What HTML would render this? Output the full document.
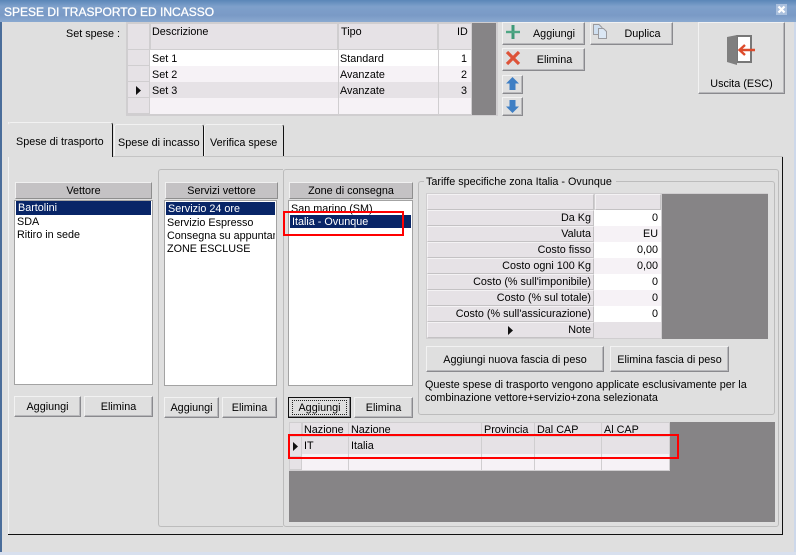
<!DOCTYPE html>
<html><head><meta charset="utf-8"><style>
html,body{margin:0;padding:0}
body{width:796px;height:555px;overflow:hidden;position:relative;background:#dfdfdf;font:10.8px/16px "Liberation Sans",sans-serif;color:#000}
div{position:absolute;box-sizing:border-box;white-space:nowrap}
svg{position:absolute}
.btn{background:#dfdfdf;border:1px solid;border-color:#f2f2f2 #8a8a8e #8a8a8e #f2f2f2;text-align:center;box-shadow:inset -1px -1px 0 #b8b8bb}
.hd{background:#c4c2c4;border:1px solid;border-color:#f0f0f0 #8e8e8e #8e8e8e #f0f0f0;text-align:center;line-height:16px}
.list{background:#fff;border:1px solid #a3a3a3}
.sel{background:#082567;color:#fff;height:14px;line-height:15px;padding-left:2px}
.it{height:13px;line-height:15px;padding-left:3px}
.c{background:#e6e2e6;border:1px solid;border-color:#f4f2f4 #c4c2c4 #c4c2c4 #f4f2f4;height:16px}
.t{line-height:16px}
.r{text-align:right}
.ln{background:#d0ced0}
.red{border:2px solid #f00}
.gray{background:#868486}
</style></head><body>
<!-- window frame -->
<div style="left:0;top:0;width:796px;height:22px;background:linear-gradient(#5a86b8,#7ea0cb 30%,#7a9ac6 70%,#8aa9d0)"></div>
<div style="left:0;top:22px;width:2px;height:533px;background:#4a6d9a"></div>
<div style="left:794px;top:22px;width:2px;height:533px;background:#cdd8ea"></div>
<div style="left:0;top:552px;width:796px;height:3px;background:#d8e0ee"></div>
<div style="left:4px;top:4px;color:#fff;font-size:12px;line-height:16px;-webkit-text-stroke:.3px #fff">SPESE DI TRASPORTO ED INCASSO</div>
<div style="left:776px;top:4px;width:11px;height:11px;background:#a9bfdd"></div>
<svg style="left:776px;top:4px" width="11" height="11"><path d="M2.5 2.5L8.5 8.5M8.5 2.5L2.5 8.5" stroke="#fff" stroke-width="2.2"/></svg>

<!-- Set spese grid -->
<div class="t" style="left:66px;top:26px">Set spese :</div>
<div style="left:126px;top:22px;width:372px;height:94px;background:#d0ced0"></div>
<div style="left:128px;top:24px;width:21px;height:25px;background:#e6e2e6"></div>
<div style="left:151px;top:24px;width:186px;height:25px;background:#e6e2e6"></div>
<div style="left:339px;top:24px;width:98px;height:25px;background:#e6e2e6"></div>
<div style="left:439px;top:24px;width:32px;height:25px;background:#e6e2e6"></div>
<div style="left:472px;top:23px;width:24px;height:92px;background:#868486"></div>
<div style="left:128px;top:50px;width:21px;height:15px;background:#e6e2e6"></div>
<div style="left:128px;top:66px;width:21px;height:15px;background:#e6e2e6"></div>
<div style="left:128px;top:82px;width:21px;height:15px;background:#e6e2e6"></div>
<div style="left:128px;top:98px;width:21px;height:15px;background:#e6e2e6"></div>
<div style="left:150px;top:50px;width:321px;height:16px;background:#fff"></div>
<div style="left:150px;top:66px;width:321px;height:16px;background:#f6f2f6"></div>
<div style="left:150px;top:82px;width:321px;height:16px;background:#e6e2e6"></div>
<div style="left:150px;top:98px;width:321px;height:16px;background:#f6f2f6"></div>
<div class="ln" style="left:338px;top:50px;width:1px;height:64px"></div>
<div class="ln" style="left:438px;top:50px;width:1px;height:64px"></div>
<div class="t" style="left:152px;top:24px">Descrizione</div>
<div class="t" style="left:341px;top:24px">Tipo</div>
<div class="t" style="left:457px;top:24px">ID</div>
<div class="t" style="left:152px;top:51px">Set 1</div>
<div class="t" style="left:340px;top:51px">Standard</div>
<div class="t r" style="left:447px;top:51px;width:20px">1</div>
<div class="t" style="left:152px;top:67px">Set 2</div>
<div class="t" style="left:340px;top:67px">Avanzate</div>
<div class="t r" style="left:447px;top:67px;width:20px">2</div>
<div class="t" style="left:152px;top:83px">Set 3</div>
<div class="t" style="left:340px;top:83px">Avanzate</div>
<div class="t r" style="left:447px;top:83px;width:20px">3</div>
<svg style="left:135px;top:85px" width="7" height="11"><path d="M1 1L6 5.5L1 10Z" fill="#111"/></svg>

<!-- top buttons -->
<div class="btn" style="left:502px;top:22px;width:83px;height:23px;padding:3px 0 0 21px">Aggiungi</div>
<svg style="left:505px;top:24px" width="16" height="16"><path d="M8 1V15" stroke="#3f9a78" stroke-width="3"/><path d="M1 8H15" stroke="#4fa684" stroke-width="2.4"/></svg>
<div class="btn" style="left:590px;top:22px;width:83px;height:23px;padding:3px 0 0 22px">Duplica</div>
<svg style="left:592px;top:23px" width="17" height="17"><path d="M1.500 1.500H7L10 4.500V11.500H1.500Z" fill="#cfdff0" stroke="#9a9a9e"/><path d="M6.500 5.500H11.500L14.500 8.500V15.500H6.500Z" fill="#dbe7f4" stroke="#9a9a9e"/></svg>
<div class="btn" style="left:502px;top:48px;width:83px;height:23px;padding:3px 0 0 22px">Elimina</div>
<svg style="left:505px;top:50px" width="16" height="16"><path d="M2 2L14 14M14 2L2 14" stroke="#dd5338" stroke-width="3.200"/></svg>
<div class="btn" style="left:502px;top:75px;width:21px;height:19px"></div>
<svg style="left:505px;top:76px" width="15" height="15"><path d="M7.500 1L14 7.500H10.500V14H4.500V7.500H1Z" fill="#3f7fc4"/></svg>
<div class="btn" style="left:502px;top:97px;width:21px;height:19px"></div>
<svg style="left:505px;top:99px" width="15" height="15"><path d="M7.500 14L14 7.500H10.500V1H4.500V7.500H1Z" fill="#3f7fc4"/></svg>
<div class="btn" style="left:698px;top:22px;width:87px;height:72px;padding:53px 0 0 0">Uscita (ESC)</div>
<svg style="left:725px;top:33px" width="32" height="34"><rect x="12" y="3" width="14" height="26" fill="#fff" stroke="#777" stroke-width="2"/><path d="M2 4L12 2V32L2 29Z" fill="#7f7f7f"/><path d="M30 17H15M20 12L14.500 17L20 22" fill="none" stroke="#dd4b2c" stroke-width="2.400"/></svg>

<!-- tabs -->
<div style="left:8px;top:156px;width:775px;height:1px;background:#c4c4c4"></div>
<div style="left:782px;top:157px;width:1px;height:378px;background:#111"></div>
<div style="left:8px;top:534px;width:775px;height:1px;background:#111"></div>
<div style="left:8px;top:122px;width:1px;height:412px;background:#f2f2f2"></div>
<div style="left:8px;top:122px;width:105px;height:35px;background:#dfdfdf;border-top:1px solid #f2f2f2;border-right:1px solid #111;border-radius:3px 3px 0 0"></div>
<div style="left:114px;top:124px;width:90px;height:32px;border-top:1px solid #f2f2f2;border-left:1px solid #f2f2f2;border-right:1px solid #111;border-radius:3px 3px 0 0"></div>
<div style="left:204px;top:124px;width:80px;height:32px;border-top:1px solid #f2f2f2;border-left:1px solid #f2f2f2;border-right:1px solid #111;border-radius:3px 3px 0 0"></div>
<div class="t" style="left:16px;top:134px">Spese di trasporto</div>
<div class="t" style="left:118px;top:135px">Spese di incasso</div>
<div class="t" style="left:210px;top:135px">Verifica spese</div>

<!-- inner panels -->
<div style="left:158px;top:169px;width:125px;height:358px;border:1px solid #bcbcbc;border-right:0;border-radius:3px 0 0 3px"></div>
<div style="left:283px;top:169px;width:496px;height:358px;border:1px solid #bcbcbc;border-radius:3px"></div>

<!-- Vettore -->
<div class="hd" style="left:15px;top:182px;width:137px;height:17px">Vettore</div>
<div class="list" style="left:14px;top:200px;width:139px;height:185px"></div>
<div class="sel" style="left:16px;top:201px;width:135px">Bartolini</div>
<div class="it" style="left:14px;top:215px">SDA</div>
<div class="it" style="left:14px;top:228px">Ritiro in sede</div>
<div class="btn" style="left:14px;top:396px;width:67px;height:21px;padding-top:2px">Aggiungi</div>
<div class="btn" style="left:84px;top:396px;width:69px;height:21px;padding-top:2px">Elimina</div>

<!-- Servizi -->
<div class="hd" style="left:165px;top:182px;width:113px;height:17px">Servizi vettore</div>
<div class="list" style="left:164px;top:200px;width:113px;height:186px"></div>
<div class="sel" style="left:166px;top:202px;width:109px;height:13px">Servizio 24 ore</div>
<div class="it" style="left:164px;top:216px">Servizio Espresso</div>
<div class="it" style="left:164px;top:229px;width:111px;overflow:hidden">Consegna su appuntamento</div>
<div class="it" style="left:164px;top:242px">ZONE ESCLUSE</div>
<div class="btn" style="left:164px;top:397px;width:55px;height:21px;padding-top:2px">Aggiungi</div>
<div class="btn" style="left:222px;top:397px;width:55px;height:21px;padding-top:2px">Elimina</div>

<!-- Zone -->
<div class="hd" style="left:289px;top:182px;width:124px;height:17px">Zone di consegna</div>
<div class="list" style="left:288px;top:200px;width:125px;height:186px"></div>
<div class="it" style="left:288px;top:202px">San marino (SM)</div>
<div class="sel" style="left:290px;top:215px;width:121px;height:13px">Italia - Ovunque</div>
<div style="left:288px;top:397px;width:63px;height:21px;border:1px solid #111;background:#dfdfdf;text-align:center;padding-top:2px;box-shadow:inset -1px -1px 0 #8a8a8e">Aggiungi</div>
<div style="left:292px;top:400px;width:55px;height:15px;border:1px dotted #222"></div>
<div class="btn" style="left:354px;top:397px;width:59px;height:21px;padding-top:2px">Elimina</div>

<!-- Group -->
<div style="left:418px;top:181px;width:357px;height:234px;border:1px solid #bcbcbc;border-radius:3px"></div>
<div class="t" style="left:424px;top:174px;background:#dfdfdf;padding:0 4px 0 2px">Tariffe specifiche zona Italia - Ovunque</div>
<div style="left:426px;top:193px;width:342px;height:146px;background:#d0ced0"></div>
<div class="gray" style="left:662px;top:194px;width:106px;height:145px"></div>
<div class="c" style="left:427px;top:194px;width:167px"></div>
<div class="c" style="left:595px;top:194px;width:66px"></div>
<div class="c" style="left:427px;top:210px;width:167px"></div>
<div class="c" style="left:427px;top:226px;width:167px"></div>
<div class="c" style="left:427px;top:242px;width:167px"></div>
<div class="c" style="left:427px;top:258px;width:167px"></div>
<div class="c" style="left:427px;top:274px;width:167px"></div>
<div class="c" style="left:427px;top:290px;width:167px"></div>
<div class="c" style="left:427px;top:306px;width:167px"></div>
<div class="c" style="left:427px;top:322px;width:167px"></div>
<div style="left:594px;top:210px;width:67px;height:16px;background:#fff"></div>
<div style="left:594px;top:226px;width:67px;height:16px;background:#f6f2f6"></div>
<div style="left:594px;top:242px;width:67px;height:16px;background:#fff"></div>
<div style="left:594px;top:258px;width:67px;height:16px;background:#f6f2f6"></div>
<div style="left:594px;top:274px;width:67px;height:16px;background:#fff"></div>
<div style="left:594px;top:290px;width:67px;height:16px;background:#f6f2f6"></div>
<div style="left:594px;top:306px;width:67px;height:16px;background:#fff"></div>
<div style="left:594px;top:322px;width:67px;height:16px;background:#e6e2e6"></div>
<div class="t r" style="left:430px;top:210px;width:161px">Da Kg</div>
<div class="t r" style="left:430px;top:226px;width:161px">Valuta</div>
<div class="t r" style="left:430px;top:242px;width:161px">Costo fisso</div>
<div class="t r" style="left:430px;top:258px;width:161px">Costo ogni 100 Kg</div>
<div class="t r" style="left:430px;top:274px;width:161px">Costo (% sull'imponibile)</div>
<div class="t r" style="left:430px;top:290px;width:161px">Costo (% sul totale)</div>
<div class="t r" style="left:430px;top:306px;width:161px">Costo (% sull'assicurazione)</div>
<div class="t r" style="left:430px;top:322px;width:161px">Note</div>
<svg style="left:507px;top:325px" width="7" height="11"><path d="M1 1L6 5.500L1 10Z" fill="#111"/></svg>
<div class="t r" style="left:600px;top:210px;width:58px">0</div>
<div class="t r" style="left:600px;top:226px;width:58px">EU</div>
<div class="t r" style="left:600px;top:242px;width:58px">0,00</div>
<div class="t r" style="left:600px;top:258px;width:58px">0,00</div>
<div class="t r" style="left:600px;top:274px;width:58px">0</div>
<div class="t r" style="left:600px;top:290px;width:58px">0</div>
<div class="t r" style="left:600px;top:306px;width:58px">0</div>
<div class="btn" style="left:426px;top:346px;width:178px;height:26px;padding-top:5px">Aggiungi nuova fascia di peso</div>
<div class="btn" style="left:610px;top:346px;width:119px;height:26px;padding-top:5px">Elimina fascia di peso</div>
<div class="t" style="left:425px;top:377px">Queste spese di trasporto vengono applicate esclusivamente per la</div>
<div class="t" style="left:425px;top:390px">combinazione vettore+servizio+zona selezionata</div>

<!-- bottom grid -->
<div class="gray" style="left:289px;top:422px;width:486px;height:100px"></div>
<div style="left:289px;top:422px;width:381px;height:49px;background:#d0ced0"></div>
<div style="left:290px;top:423px;width:11px;height:13px;background:#e6e2e6"></div>
<div style="left:303px;top:423px;width:45px;height:13px;background:#e6e2e6"></div>
<div style="left:349px;top:423px;width:132px;height:13px;background:#e6e2e6"></div>
<div style="left:482px;top:423px;width:52px;height:13px;background:#e6e2e6"></div>
<div style="left:535px;top:423px;width:66px;height:13px;background:#e6e2e6"></div>
<div style="left:602px;top:423px;width:67px;height:13px;background:#e6e2e6"></div>
<div style="left:290px;top:437px;width:11px;height:19px;background:#e6e2e6"></div>
<div style="left:290px;top:457px;width:11px;height:12px;background:#e6e2e6"></div>
<div style="left:302px;top:454px;width:367px;height:16px;background:#f6f2f6"></div>
<div style="left:302px;top:437px;width:367px;height:17px;background:#e6e2e6"></div>
<div class="ln" style="left:348px;top:437px;width:1px;height:33px"></div>
<div class="ln" style="left:481px;top:437px;width:1px;height:33px"></div>
<div class="ln" style="left:534px;top:437px;width:1px;height:33px"></div>
<div class="ln" style="left:601px;top:437px;width:1px;height:33px"></div>
<div class="t" style="left:304px;top:422px">Nazione</div>
<div class="t" style="left:351px;top:422px">Nazione</div>
<div class="t" style="left:484px;top:422px">Provincia</div>
<div class="t" style="left:537px;top:422px">Dal CAP</div>
<div class="t" style="left:604px;top:422px">Al CAP</div>
<div class="t" style="left:304px;top:438px">IT</div>
<div class="t" style="left:351px;top:438px">Italia</div>
<svg style="left:292px;top:441px" width="7" height="11"><path d="M1 1L6 5.500L1 10Z" fill="#111"/></svg>

<!-- red annotations -->
<div class="red" style="left:283px;top:211px;width:121px;height:25px"></div>
<div class="red" style="left:288px;top:434px;width:391px;height:25px"></div>
</body></html>
